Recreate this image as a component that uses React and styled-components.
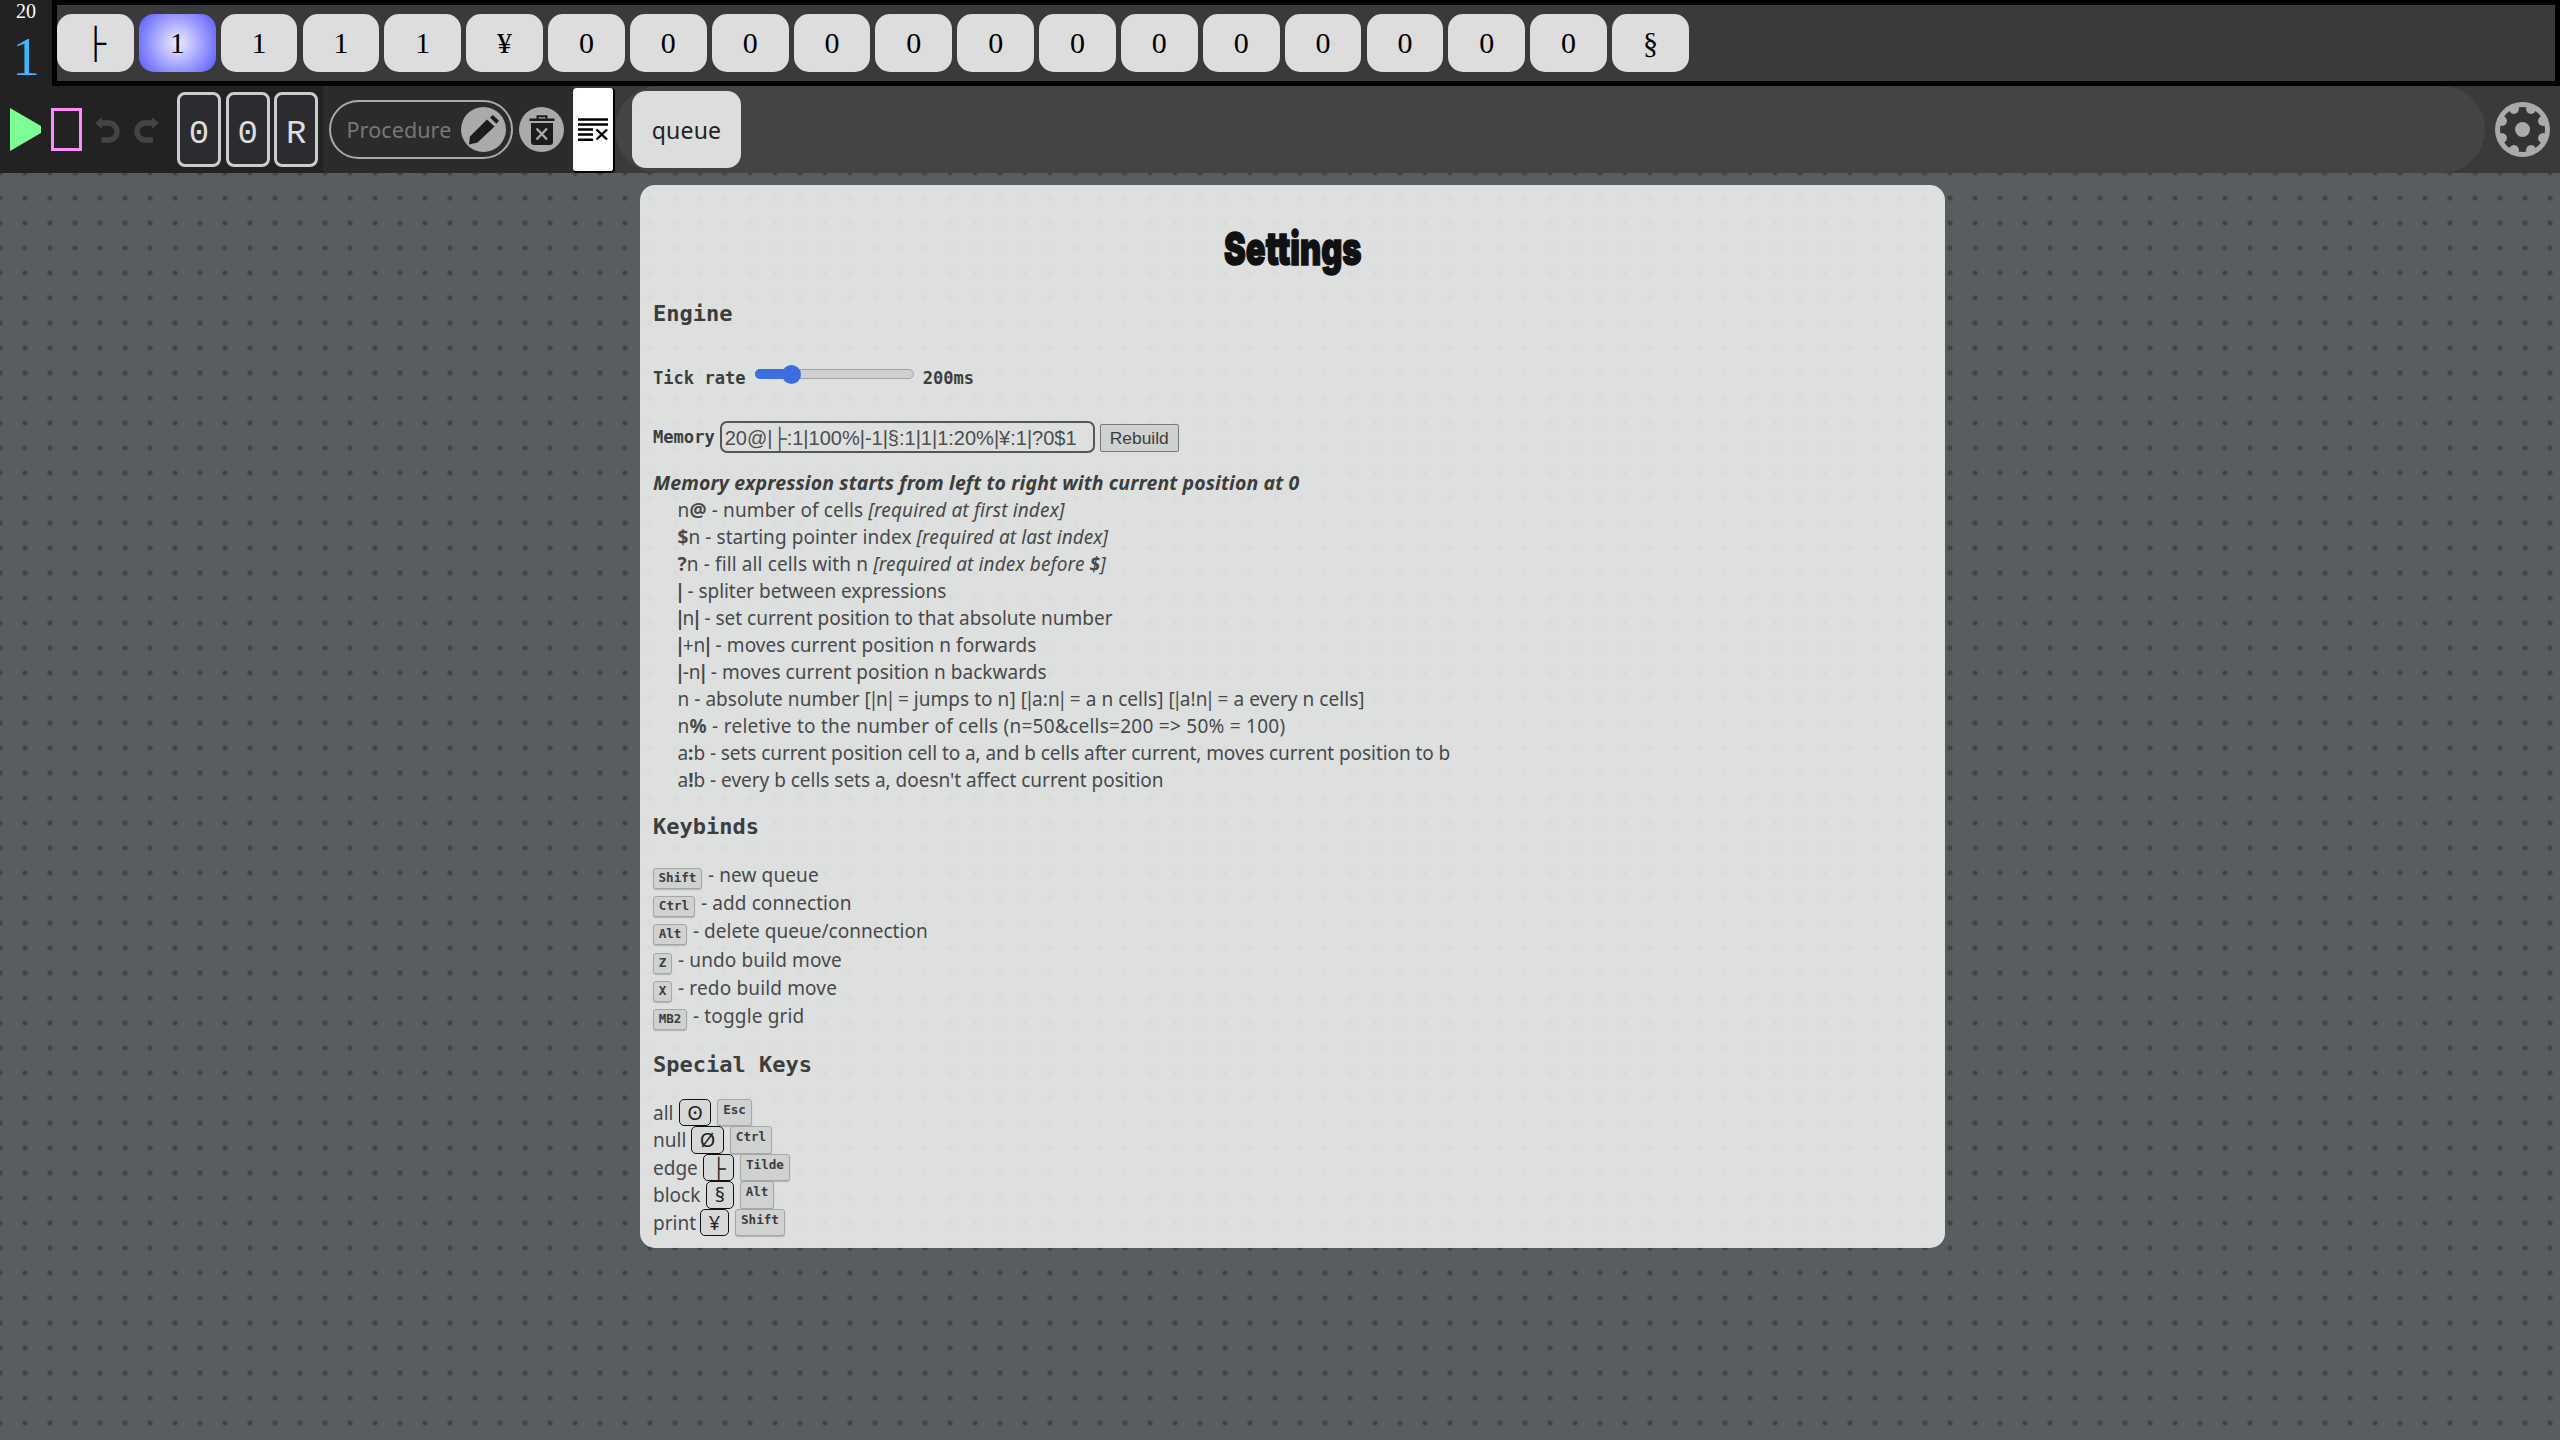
import React from 'react';
import styled, { createGlobalStyle } from 'styled-components';

const SANS = '"Noto Sans", "Open Sans", sans-serif';
const MONO = '"DejaVu Sans Mono", monospace';
const SERIF = '"Liberation Serif", serif';
const ARIAL = '"Liberation Sans", sans-serif';

const Global = createGlobalStyle`
  * { box-sizing: border-box; }
  body { margin: 0; background: #595d60; overflow: hidden; }
`;
const Page = styled.div`
  height: 1440px; display: flex; flex-direction: column;
  background: #595d60 radial-gradient(circle at 12.5px 12.5px, #424548 2.2px, rgba(66,69,72,0) 3px) 12.5px 10.5px / 25px 25px;
`;
const TopBar = styled.header`display: flex; height: 86px;`;
const Counter = styled.div`
  width: 52px; background: #222; display: flex; flex-direction: column; align-items: center;
  font-family: ${SERIF}; color: #fff;
`;
const CellCount = styled.span`font-size: 20px; line-height: 23px;`;
const Pointer = styled.span`font-size: 55px; line-height: 67px; color: #41b6ff;`;
const Memory = styled.div`
  flex: 1; border: 5px solid #000; background: #3a3a3a; display: flex; gap: 5.05px; align-items: center;
`;
const Cell = styled.div`
  width: 76.8px; height: 58px; border-radius: 15px; display: flex; align-items: center; justify-content: center;
  font: 30px/58px ${SERIF}; color: #000;
  background: ${p => p.$active ? 'radial-gradient(circle, #eeeeff 0%, #5555ff 100%)' : '#ddd'};
`;
const ToolBar = styled.nav`display: flex; height: 87px; background: #3a3a3a;`;
const Controls = styled.div`
  width: 323px; background: #222; display: flex; align-items: center; padding-left: 10px;
`;
const Play = styled.svg`display: block; margin-right: 10px;`;
const Stop = styled.div`width: 31px; height: 43px; border: 3px solid #ff8cff; margin-right: 13px;`;
const Keys = styled.div`display: flex; gap: 4.6px; margin-left: 18px;`;
const Key = styled.div`
  width: 44px; height: 75px; border: 3px solid #ccc; border-radius: 8px; background: #2b2b30; color: #ddd;
  display: flex; align-items: center; justify-content: center; font: 34px/67px "Liberation Mono", monospace; padding-top: 9px;
`;
const Editor = styled.div`
  width: 250px; background: #2b2b2b; display: flex; align-items: center; padding-left: 6px; gap: 6px;
`;
const Pill = styled.div`
  width: 184px; height: 59px; border: 2px solid #aaa; border-radius: 30px; display: flex; align-items: center;
  justify-content: space-between; padding: 0 5px 0 15.5px; color: #777; font: 21.5px/30px ${SANS};
`;
const Round = styled.div`
  width: ${p => p.$size}px; height: ${p => p.$size}px; border-radius: 50%; background: #aaa; flex: none;
`;
const ClearButton = styled.div`
  width: 42px; height: 85px; margin-top: 2px; background: #fff; border-radius: 4px;
  border-right: 2px solid #000; border-bottom: 2px solid #000; display: flex; align-items: center; padding-left: 5px;
`;
const Queues = styled.div`
  width: 1870px; border-radius: 44px; background: #444; display: flex; align-items: center; padding-left: 17px;
`;
const Queue = styled.div`
  width: 109px; height: 77px; border-radius: 14px; background: #ddd; color: #222;
  display: flex; align-items: center; justify-content: center; font: 23px/30px ${SANS};
`;
const GearSlot = styled.div`flex: 1; display: flex; align-items: center; padding-left: 10px;`;

const Panel = styled.main`
  margin: 12px 0 0 640px; width: 1305px; height: 1063px; border-radius: 15px; padding: 40px 13px 0;
  background: rgba(248,251,249,.83); color: #3c3d3d; font: 19px/27px ${SANS};
  display: flex; flex-direction: column;
`;
const Title = styled.h1`
  margin: 0; align-self: center; font: 900 46px/46px Inter, sans-serif; color: #111; transform: scaleX(.71);
  -webkit-text-stroke: 1.6px #111;
`;
const Heading = styled.h2`margin: ${p => p.$top}px 0 0; font: bold 22px/28px ${MONO};`;
const Setting = styled.div`
  display: flex; align-items: center; height: ${p => p.$h}px; margin-top: ${p => p.$top}px;
`;
const Label = styled.span`font: bold 17.1px/${p => p.$h || 24}px ${MONO};`;
const Track = styled.div`
  width: 159px; height: 10px; margin: -8px 9px 0 9px; border: 1px solid #a0a1a1; border-radius: 5px; background: #cfd0d0;
  display: flex; align-items: center;
`;
const Fill = styled.div`width: 29px; height: 10px; margin-left: -1px; flex: none; border-radius: 5px 0 0 5px; background: #3b6edf;`;
const Thumb = styled.div`width: 19px; height: 19px; margin-left: -2px; flex: none; border-radius: 50%; background: #3b6edf;`;
const Field = styled.div`
  width: 375px; height: 32px; margin: 0 5px 0 5px; border: 2px solid #555756; border-radius: 7px; padding-left: 3px;
  font: 20px/30px ${ARIAL}; white-space: nowrap; color: #4c4d4d;
`;
const Rebuild = styled.div`
  width: 79px; height: 28px; margin-top: 2px; border: 1px solid #777; border-radius: 2px; background: #d0d1d1;
  font: 17.4px/26px ${ARIAL}; text-align: center;
`;
const Lead = styled.div`margin-top: 16px; font-size: 19.5px; font-weight: bold; font-style: italic; white-space: nowrap;`;
const Rules = styled.div`padding: 1px 0 0 24.5px; white-space: nowrap; color: #48494a;`;
const Rule = styled.div`height: 27px;`;
const Text = styled.span`letter-spacing: ${p => p.$ls || 0}px; white-space: pre;`;
const Bar = styled.span`margin: 0 -2.7px; font-weight: ${p => p.$bold ? 'bold' : 'normal'};`;
const Binds = styled.div`margin-top: 19px;`;
const Bind = styled.div`display: flex; height: 28.2px; line-height: 31px; color: #48494a;`;
const Kbd = styled.kbd`
  width: ${p => p.$w}px; height: ${p => p.$tall ? 27.5 : 21}px; margin: ${p => p.$tall ? '0 0 0 6px' : '8px 6px 0 0'};
  border: 1px solid #a6a7a7; border-radius: 3px; background: #d0d1d1; box-shadow: 0 1px 1px rgba(0,0,0,.2);
  font: bold 12.6px/${p => p.$tall ? 20 : 18}px ${MONO}; text-align: center; color: #3c3d3d;
`;
const Specials = styled.div`margin-top: 19.5px;`;
const Special = styled.div`display: flex; height: 27.5px; line-height: 29.5px; color: #48494a;`;
const Name = styled.span`width: ${p => p.$w}px;`;
const Symbol = styled.span`
  width: ${p => p.$w}px; height: 27.5px; border: 1.5px solid #111; border-radius: 5px; background: #d7d8d8; color: #222;
  font: 20px/26px ${SANS}; text-align: center;
`;

const cells = ['├', '1', '1', '1', '1', '¥', ...Array(13).fill('0'), '§'];
const B = () => <Bar>|</Bar>;
const BB = () => <Bar $bold>|</Bar>;
const rules = [
  [0.14, <>n<b>@</b> - number of cells <i>[required at first index]</i></>],
  [0.07, <><b>$</b>n - starting pointer index <i>[required at last index]</i></>],
  [0.13, <><b>?</b>n - fill all cells with n <i>[required at index before <b>$</b>]</i></>],
  [-0.04, <><BB /> - spliter between expressions</>],
  [0, <><BB />n<BB /> - set current position to that absolute number</>],
  [0.07, <><BB />+n<BB /> - moves current position n forwards</>],
  [0.05, <><BB />-n<BB /> - moves current position n backwards</>],
  [0.04, <>n - absolute number [<B />n<B /> = jumps to n] [<B />a:n<B /> = a n cells] [<B />a!n<B /> = a every n cells]</>],
  [0.26, <>n<b>%</b> - reletive to the number of cells (n=50&amp;cells=200 =&gt; 50% = 100)</>],
  [-0.065, <>a<b>:</b>b - sets current position cell to a, and b cells after current, moves current position to b</>],
  [-0.02, <>a<b>!</b>b - every b cells sets a, doesn't affect current position</>],
];
const binds = [
  ['Shift', 49, '- new queue', 0.1], ['Ctrl', 42, '- add connection', 0.1], ['Alt', 34, '- delete queue/connection', 0.02],
  ['Z', 19, '- undo build move', 0.12], ['X', 19, '- redo build move', 0.15], ['MB2', 34, '- toggle grid', 0.15],
];
const specials = [
  ['all', 26, 'ʘ', 32, 'Esc', 35], ['null', 38, 'Ø', 33, 'Ctrl', 42], ['edge', 50, '├', 31, 'Tilde', 50],
  ['block', 53, '§', 28, 'Alt', 34], ['print', 47, '¥', 29, 'Shift', 50],
];

export default function App() {
  return (
    <Page>
      <Global />
      <TopBar>
        <Counter><CellCount>20</CellCount><Pointer>1</Pointer></Counter>
        <Memory>{cells.map((c, i) => <Cell key={i} $active={i === 1}>{c}</Cell>)}</Memory>
      </TopBar>
      <ToolBar>
        <Controls>
          <Play width="31" height="43"><path d="M0 0L31 18V25L0 43Z" fill="#7dff96" /></Play>
          <Stop />
          <svg width="64" height="26" fill="none" stroke="#444" strokeWidth="5.5">
            <path d="M5 6H13.5a8.3 8.3 0 0 1 0 17H6.5" /><path d="M0 6L7 0V12Z" fill="#444" stroke="none" />
            <path d="M59 6H50.500a8.300 8.300 0 0 0 0 17H58" /><path d="M64 6L57 0V12Z" fill="#444" stroke="none" />
          </svg>
          <Keys><Key>0</Key><Key>0</Key><Key>R</Key></Keys>
        </Controls>
        <Editor>
          <Pill>
            <Text $ls={0.1}>Procedure</Text>
            <Round $size={45}>
              <svg width="45" height="45" fill="#1c1c1c">
                <path d="M8 37.500L9 29.500L26 12.500L33.500 19.500L16.500 35.500Z" /><path d="M29 10.500L31.800 8L38 13.800L35.300 16.700Z" />
              </svg>
            </Round>
          </Pill>
          <Round $size={45}>
            <svg width="45" height="45" fill="#1c1c1c">
              <path d="M12 16H34V35a3 3 0 0 1-3 3H15a3 3 0 0 1-3-3Z" /><path d="M10.500 11.500H35.500V14H10.500Z" />
              <path d="M18.500 12V9.200H27.500V12" fill="none" stroke="#1c1c1c" strokeWidth="2" />
              <path d="M17.500 21.500L28 32.500M28 21.500L17.500 32.500" stroke="#aaa" strokeWidth="2.400" />
            </svg>
          </Round>
        </Editor>
        <ClearButton>
          <svg width="30" height="26" stroke="#000" strokeWidth="2.400" fill="none">
            <path d="M0 2.500H30M0 7.500H30M0 12.500H15M0 17.500H15M0 22.700H15" />
            <path d="M18.500 12.500L29 22.500M29 12.500L18.500 22.500" />
          </svg>
        </ClearButton>
        <Queues><Queue><Text $ls={0.2}>queue</Text></Queue></Queues>
        <GearSlot>
          <Round $size={55}>
            <svg width="55" height="55" viewBox="-27.5 -27.5 55 55">
              <circle r="22.500" fill="#333" />
              {[0, 1, 2, 3, 4, 5, 6, 7].map(k => (
                <circle key={k} cx="22.300" cy="0" r="5" fill="#aaa" transform={`rotate(${22.5 + 45 * k})`} />
              ))}
              <circle r="7.500" fill="#aaa" />
            </svg>
          </Round>
        </GearSlot>
      </ToolBar>
      <Panel>
        <Title>Settings</Title>
        <Heading $top={29}>Engine</Heading>
        <Setting $h={24} $top={38}>
          <Label>Tick rate</Label>
          <Track><Fill /><Thumb /></Track>
          <Label>200ms</Label>
        </Setting>
        <Setting $h={32} $top={31}>
          <Label $h={36}>Memory</Label>
          <Field>20@|├:1|100%|-1|§:1|1|1:20%|¥:1|?0$1</Field>
          <Rebuild>Rebuild</Rebuild>
        </Setting>
        <Lead><Text $ls={0.09}>Memory expression starts from left to right with current position at 0</Text></Lead>
        <Rules>{rules.map(([ls, t], i) => <Rule key={i}><Text $ls={ls}>{t}</Text></Rule>)}</Rules>
        <Heading $top={19}>Keybinds</Heading>
        <Binds>{binds.map(([k, kw, t, ls]) => <Bind key={k}><Kbd $w={kw}>{k}</Kbd><Text $ls={ls}>{t}</Text></Bind>)}</Binds>
        <Heading $top={22}>Special Keys</Heading>
        <Specials>
          {specials.map(([n, nw, s, sw, k, kw]) => (
            <Special key={n}><Name $w={nw}>{n}</Name><Symbol $w={sw}>{s}</Symbol><Kbd $tall $w={kw}>{k}</Kbd></Special>
          ))}
        </Specials>
      </Panel>
    </Page>
  );
}
